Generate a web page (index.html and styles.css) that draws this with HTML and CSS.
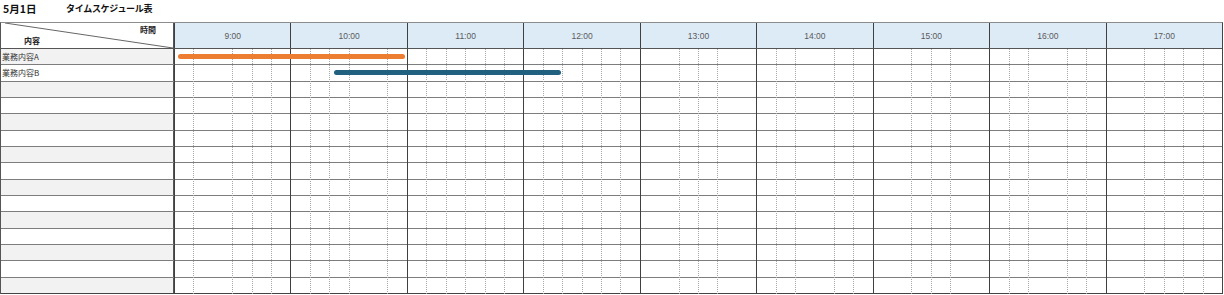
FILE: index.html
```html
<!DOCTYPE html>
<html lang="ja">
<head>
<meta charset="utf-8">
<title>タイムスケジュール表</title>
<link rel="stylesheet" href="styles.css">
</head>
<body>
<header class="title"><span class="date">5月1日</span><span class="name">タイムスケジュール表</span></header>
<div class="sheet">
  <div class="head">
    <div class="corner">
      <svg class="diag" viewBox="0 0 172 25" preserveAspectRatio="none"><line x1="4" y1="0" x2="172" y2="25"/></svg>
      <span class="c-time">時間</span>
      <span class="c-content">内容</span>
    </div>
    <div class="hh">9:00</div>
    <div class="hh">10:00</div>
    <div class="hh">11:00</div>
    <div class="hh">12:00</div>
    <div class="hh">13:00</div>
    <div class="hh">14:00</div>
    <div class="hh">15:00</div>
    <div class="hh">16:00</div>
    <div class="hh">17:00</div>
  </div>
  <div class="body">
    <div class="rows">
      <div class="row"><div class="label">業務内容A</div><div class="track"><span class="bar orange" style="left:4px;width:227px"></span></div></div>
      <div class="row"><div class="label">業務内容B</div><div class="track"><span class="bar blue" style="left:160px;width:227px"></span></div></div>
      <div class="row"><div class="label"></div><div class="track"></div></div>
      <div class="row"><div class="label"></div><div class="track"></div></div>
      <div class="row"><div class="label"></div><div class="track"></div></div>
      <div class="row"><div class="label"></div><div class="track"></div></div>
      <div class="row"><div class="label"></div><div class="track"></div></div>
      <div class="row"><div class="label"></div><div class="track"></div></div>
      <div class="row"><div class="label"></div><div class="track"></div></div>
      <div class="row"><div class="label"></div><div class="track"></div></div>
      <div class="row"><div class="label"></div><div class="track"></div></div>
      <div class="row"><div class="label"></div><div class="track"></div></div>
      <div class="row"><div class="label"></div><div class="track"></div></div>
      <div class="row"><div class="label"></div><div class="track"></div></div>
      <div class="row"><div class="label"></div><div class="track"></div></div>
    </div>
    <div class="cols">
      <div class="spacer"></div>
      <div class="hour"><i></i><i class="off"></i><i></i><i></i><i></i><i></i></div>
      <div class="hour"><i></i><i></i><i></i><i class="off"></i><i></i><i></i></div>
      <div class="hour"><i></i><i></i><i></i><i></i><i></i><i></i></div>
      <div class="hour"><i></i><i></i><i></i><i></i><i></i><i></i></div>
      <div class="hour"><i class="off"></i><i></i><i></i><i></i><i class="off"></i><i></i></div>
      <div class="hour"><i></i><i></i><i class="off"></i><i></i><i></i><i></i></div>
      <div class="hour"><i class="off"></i><i></i><i></i><i></i><i class="off"></i><i></i></div>
      <div class="hour"><i></i><i></i><i class="off"></i><i></i><i></i><i></i></div>
      <div class="hour"><i class="off"></i><i></i><i></i><i></i><i></i><i></i></div>
    </div>
  </div>
</div>
</body>
</html>
```
FILE: styles.css
```css
* { box-sizing: border-box; margin: 0; padding: 0; }
html, body { background: #fff; }
body {
  width: 1224px;
  height: 295px;
  overflow: hidden;
  font-family: "Noto Sans CJK JP", sans-serif;
  color: #222;
}

.title {
  height: 17px;
  display: flex;
  align-items: center;
  padding-left: 3px;
  font-weight: 700;
  color: #111;
  margin-bottom: 5px;
}
.date { width: 63px; font-size: 10.5px; }
.name { font-size: 9px; letter-spacing: -0.3px; }

.sheet {
  width: 1223px;
  border-top: 1px solid #8c8c8c;
  border-left: 1px solid #555;
  border-right: 1px solid #444;
}

.head {
  display: grid;
  grid-template-columns: 173px repeat(9, 1fr);
  height: 26px;
  border-bottom: 1px solid #555;
}
.corner {
  position: relative;
  display: flex;
  flex-direction: column;
  justify-content: space-between;
  padding: 2px 17px 2px 23px;
  border-right: 1px solid #555;
  font-size: 8px;
  line-height: 10px;
  font-weight: 700;
  color: #222;
}
.diag {
  position: absolute;
  inset: 0;
  width: 100%;
  height: 100%;
}
.diag line { stroke: #666; stroke-width: 1; }
.c-time { align-self: flex-end; position: relative; }
.c-content { align-self: flex-start; position: relative; }

.hh {
  background: #ddebf7;
  border-left: 1px solid #404040;
  display: flex;
  align-items: center;
  justify-content: center;
  font-family: "Liberation Sans", sans-serif;
  font-size: 8.5px;
  color: #5a5a5a;
}

.body {
  display: grid;
  height: 245px;
}
.body > * { grid-area: 1 / 1; }

.rows {
  display: grid;
  grid-template-rows: repeat(15, 1fr);
}
.row {
  display: flex;
  border-bottom: 1px solid #7d7d7d;
}
.row:last-child { border-bottom-color: #444; }
.label {
  width: 173px;
  border-right: 1px solid #555;
  display: flex;
  align-items: center;
  padding-left: 1px;
  font-size: 8px;
  color: #333;
  white-space: nowrap;
}
.row:nth-child(odd) .label { background: #f2f2f2; }
.track { flex: 1; position: relative; }
.bar {
  position: absolute;
  top: 50%;
  height: 5px;
  margin-top: -3px;
  border-radius: 3px;
  z-index: 1;
}
.orange { background: #ed7d31; }
.blue { background: #22607f; }

.cols {
  display: grid;
  grid-template-columns: 173px repeat(9, 1fr);
}
.hour {
  display: flex;
  border-left: 1px solid #404040;
}
.hour i {
  flex: 1;
  border-right: 1px dotted #a8a8a8;
}
.hour i:last-child { border-right: 0; }
.hour i.off { border-right-color: transparent; }
```
